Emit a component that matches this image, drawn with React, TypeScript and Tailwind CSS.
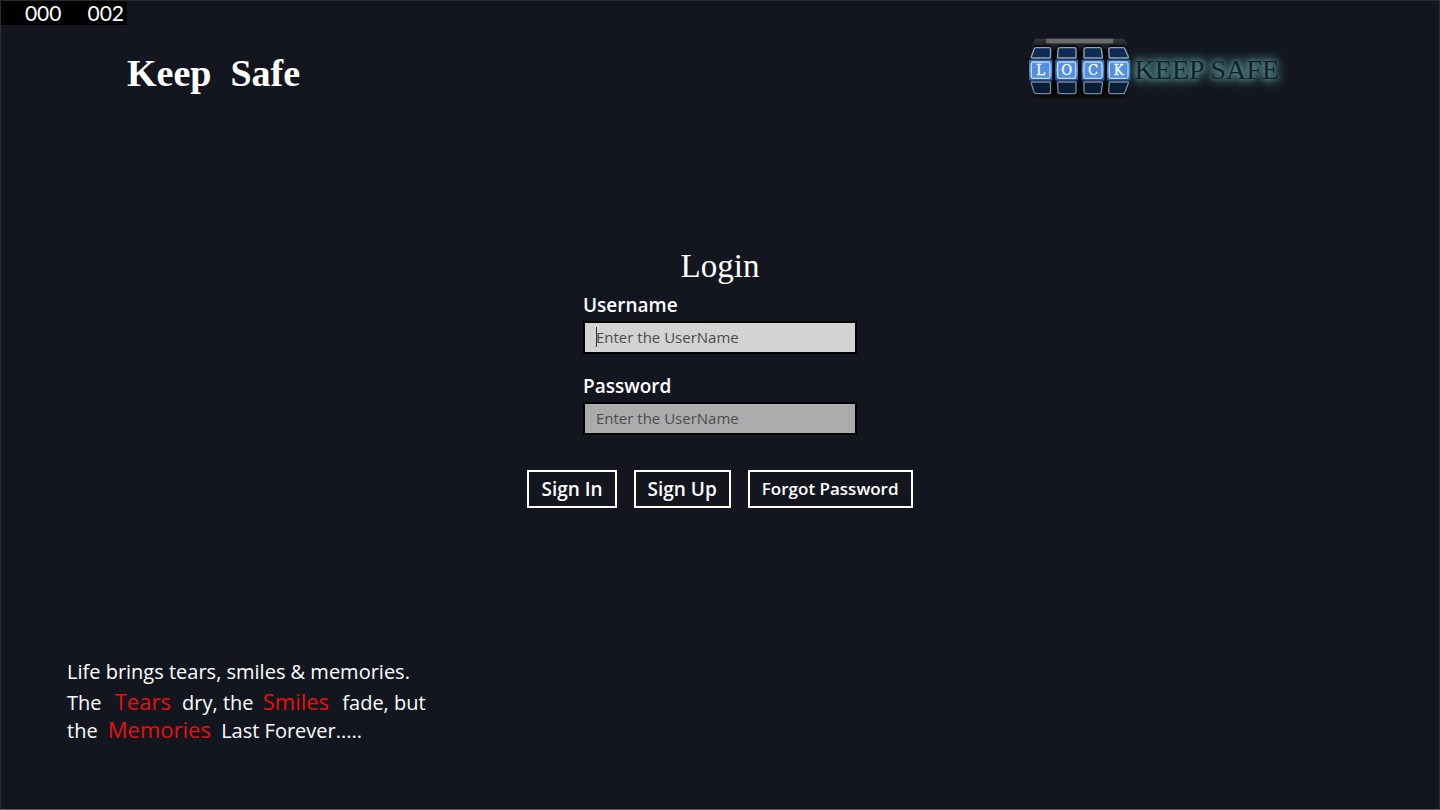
// top and bottom windows narrow towards the outer rim of each drum
const wheels = [
  { letter: "L", x: 28, width: 68, rimLeft: 44, rimRight: 91 },
  { letter: "O", x: 107, width: 66, rimLeft: 116, rimRight: 167 },
  { letter: "C", x: 186, width: 66, rimLeft: 194, rimRight: 243 },
  { letter: "K", x: 262, width: 68, rimLeft: 268, rimRight: 314 },
];

function Wheel({ letter, x, width, rimLeft, rimRight }: (typeof wheels)[number]) {
  const r = x + width;
  return (
    <g>
      <path
        d={`M${rimLeft} 45 H${rimRight} Q${r} 70 ${r} 120 Q${r} 172 ${rimRight} 197 H${rimLeft} Q${x} 172 ${x} 120 Q${x} 70 ${rimLeft} 45Z`}
        fill="url(#drum)"
      />
      <path
        d={`M${rimLeft + 4} 53 H${rimRight - 4} Q${rimRight} 53 ${rimRight + 1} 58 L${r - 5} 80 Q${r - 4} 84 ${r - 9} 84 H${x + 9} Q${x + 5} 84 ${x + 6} 80 L${rimLeft - 2} 58 Q${rimLeft} 53 ${rimLeft + 4} 53Z`}
        fill="#0d2d57"
        stroke="#9a9ea3"
        strokeWidth="4"
      />
      <path
        d={`M${x + 9} 156 H${r - 9} Q${r - 4} 156 ${r - 5} 160 L${rimRight + 1} 186 Q${rimRight} 191 ${rimRight - 4} 191 H${rimLeft + 4} Q${rimLeft} 191 ${rimLeft - 2} 186 L${x + 6} 160 Q${x + 5} 156 ${x + 9} 156Z`}
        fill="#081d3a"
        stroke="#7e8388"
        strokeWidth="4"
      />
      <rect x={x - 1} y="90" width={width + 2} height="61" fill="url(#face)" />
      <rect x={x + 6} y="96" width={width - 12} height="49" rx="5" fill="#5391e0" stroke="#c6d4e6" strokeWidth="4" />
      <text
        x={x + width / 2}
        y="136"
        textAnchor="middle"
        fontSize="44"
        fontFamily="'DejaVu Serif Condensed', 'DejaVu Serif', serif"
        fill="#f4f7fb"
        stroke="#f4f7fb"
        strokeWidth="1"
      >
        {letter}
      </text>
    </g>
  );
}

function LockLogo() {
  return (
    <svg width="104" height="68" viewBox="24 18 312 204" aria-hidden="true">
      <defs>
        <linearGradient id="drum" x1="0" y1="0" x2="0" y2="1">
          <stop offset="0" stopColor="#040b18" />
          <stop offset="0.3" stopColor="#0e3362" />
          <stop offset="0.7" stopColor="#0e3362" />
          <stop offset="1" stopColor="#030914" />
        </linearGradient>
        <linearGradient id="face" x1="0" y1="0" x2="0" y2="1">
          <stop offset="0" stopColor="#2c66b3" />
          <stop offset="0.5" stopColor="#5090e2" />
          <stop offset="1" stopColor="#2559a2" />
        </linearGradient>
        <linearGradient id="case" x1="0" y1="0" x2="0" y2="1">
          <stop offset="0" stopColor="#39393b" />
          <stop offset="0.14" stopColor="#1c1c1e" />
          <stop offset="0.2" stopColor="#060607" />
          <stop offset="0.88" stopColor="#050506" />
          <stop offset="1" stopColor="#1a1b1e" />
        </linearGradient>
      </defs>
      <path d="M46 26 H312 L321 40 V200 L306 214 H54 L38 200 V38Z" fill="url(#case)" />
      <rect x="79" y="26" width="201" height="14" fill="#6c6c6e" />
      {wheels.map((w) => (
        <Wheel key={w.letter} {...w} />
      ))}
    </svg>
  );
}

const fieldClass =
  "block h-[33px] w-full border-2 border-black px-[11px] pb-[2px] text-[15px] text-[#333] placeholder:text-[#4c4c4c] placeholder:opacity-100 outline-none";
const buttonClass = "border-2 border-white px-3 text-[19px] leading-[34px] font-semibold";
const accentClass = "text-[22px] leading-none text-[#e81010]";

export default function App() {
  return (
    <div className="relative flex min-h-screen flex-col border border-[#2a2c34] border-b-[#5c5d63] bg-[#13161f] font-['Open_Sans','Noto_Sans',sans-serif] text-white">
      <div className="absolute top-0 left-0 flex h-6 w-[126px] items-center justify-end gap-[26px] bg-black pr-[3px] font-['Lato',sans-serif] text-[21px] leading-6">
        <span>000</span>
        <span>002</span>
      </div>

      <header className="flex items-start justify-between pt-[35px] pr-[160px] pl-[126px]">
        <h1 className="pt-2 font-['Liberation_Serif',serif] text-[38px] leading-[58px] font-bold whitespace-pre">Keep  Safe</h1>
        <div className="flex items-center">
          <LockLogo />
          <span className="pl-[3px] font-['Liberation_Serif',serif] text-[28px] text-[#16202c] [text-shadow:0_0_4px_#5a9490,0_0_8px_#5a9490,0_0_12px_#5a9490,0_0_16px_#5a9490]">
            KEEP SAFE
          </span>
        </div>
      </header>

      <main className="flex flex-col items-center pt-[139px]">
        <form className="flex flex-col items-center" onSubmit={(e) => e.preventDefault()}>
          <h2 className="font-['Liberation_Serif',serif] text-[33px] leading-[46px]">Login</h2>
          <div className="w-[274px]">
            <label htmlFor="username" className="block text-[19px] leading-8 font-semibold">
              Username
            </label>
            <div className="relative">
              <input id="username" type="text" placeholder="Enter the UserName" className={`${fieldClass} bg-[#d3d3d3]`} />
              <span className="absolute top-[6px] left-[13px] h-5 w-px bg-[#333]" />
            </div>
            <label htmlFor="password" className="mt-4 block text-[19px] leading-8 font-semibold">
              Password
            </label>
            <input id="password" type="password" placeholder="Enter the UserName" className={`${fieldClass} bg-[#acacae]`} />
          </div>
          <div className="mt-[35px] flex gap-[17px]">
            <button type="submit" className={buttonClass}>
              Sign In
            </button>
            <button type="button" className={buttonClass}>
              Sign Up
            </button>
            <button type="button" className="border-2 border-white px-3 text-[17px] leading-[34px] font-semibold">
              Forgot Password
            </button>
          </div>
        </form>
      </main>

      <footer className="mt-auto pb-16 pl-[66px] text-xl leading-7">
        <p className="mb-[3px]">Life brings tears, smiles &amp; memories.</p>
        <p>
          The <span className={`mr-1.5 ml-2 ${accentClass}`}>Tears</span> dry, the{" "}
          <span className={`mr-2 ml-1 ${accentClass}`}>Smiles</span> fade, but
        </p>
        <p>
          the <span className={`mx-[5px] ${accentClass}`}>Memories</span> Last Forever.....
        </p>
      </footer>
    </div>
  );
}
